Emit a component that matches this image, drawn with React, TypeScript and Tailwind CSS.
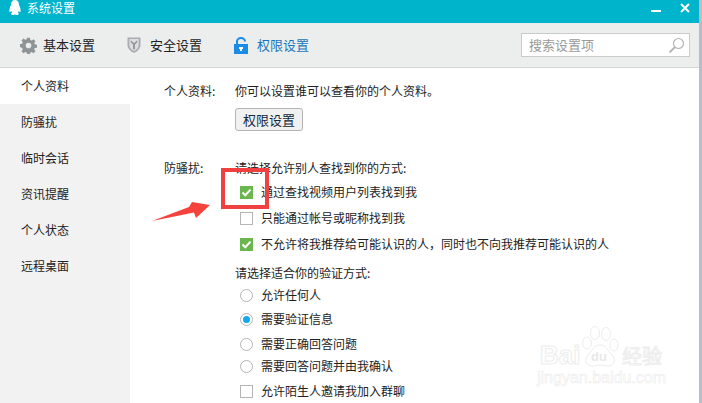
import React from "react";

const sideItems = ["个人资料", "防骚扰", "临时会话", "资讯提醒", "个人状态", "远程桌面"];

const Check = ({ checked, className }: { checked?: boolean; className?: string }) =>
  checked ? (
    <span className={"flex h-[13px] w-[13px] items-center justify-center bg-[#6cb650] " + (className || "")}>
      <svg width="11" height="11" viewBox="0 0 11 11">
        <path d="M1.5 5.5 L4.3 8.2 L9.5 2.6" fill="none" stroke="#fff" strokeWidth="2" />
      </svg>
    </span>
  ) : (
    <span className={"block h-[13px] w-[13px] border border-[#b5b5b5] bg-white " + (className || "")}></span>
  );

const Radio = ({ checked }: { checked?: boolean }) => (
  <span className="flex h-[13px] w-[13px] items-center justify-center rounded-full border border-[#b5b5b5] bg-white">
    {checked && <span className="block h-[7px] w-[7px] rounded-full bg-[#12a8ee]"></span>}
  </span>
);

const CheckRow = ({ text, checked, className }: { text: string; checked?: boolean; className?: string }) => (
  <div className={"flex items-center gap-[8px] pl-[5px] " + (className || "")}>
    <Check checked={checked} />
    <span>{text}</span>
  </div>
);

const RadioRow = ({ text, checked, className }: { text: string; checked?: boolean; className?: string }) => (
  <div className={"flex items-center gap-[8px] pl-[5px] " + (className || "")}>
    <Radio checked={checked} />
    <span>{text}</span>
  </div>
);

export default function App() {
  return (
    <div
      className="relative h-[403px] w-[702px] overflow-hidden bg-white text-[12px] text-[#222]"
      style={{ fontFamily: '"Noto Sans CJK SC", "Liberation Sans", sans-serif' }}
    >
      <div className="flex h-[23px] items-start justify-between bg-[#00b4cc] pl-[9px] pr-[12px] text-white">
        <div className="flex items-start gap-[6px]">
          <svg width="12" height="16" viewBox="0 0 12 16">
            <path d="M6 0 C3 0 2 2.500 2 5 C1 7 0 9.500 .5 12 C1.200 12.500 2 11 2.300 11 L3 12.500 C2 13 1.800 15 4 15 C5 15 5.500 14.500 6 14.500 C6.500 14.500 7 15 8 15 C10.200 15 10 13 9 12.500 L9.700 11 C10 11 10.800 12.500 11.500 12 C12 9.500 11 7 10 5 C10 2.500 9 0 6 0Z" fill="#fff" />
          </svg>
          <span className="leading-[16px]">系统设置</span>
        </div>
        <div className="flex items-start gap-[19px] pt-[3px]">
          <span className="mt-[7px] block h-[2px] w-[10px] bg-white"></span>
          <svg width="10" height="10" viewBox="0 0 10 10">
            <path d="M1 1 L9 9 M9 1 L1 9" stroke="#fff" strokeWidth="2" />
          </svg>
        </div>
      </div>

      <div className="flex h-[45px] items-center border-b border-[#d5d7d7] bg-[#eceeee] pl-[20px] pr-[12px] text-[13px]">
        <div className="flex items-center gap-[6px]">
          <svg width="17" height="17" viewBox="0 0 24 24">
            <path
              fillRule="evenodd"
              fill="#8f9496"
              d="M10 1h4l.6 3.100 1.900.8 2.600-1.800 2.800 2.800-1.800 2.600.8 1.900 3.100.6v4l-3.100.6-.8 1.900 1.800 2.600-2.800 2.800-2.600-1.800-1.900.8-.6 3.100h-4l-.6-3.100-1.900-.8-2.600 1.800-2.800-2.800 1.800-2.600-.8-1.900L0 14v-4l3.100-.6.8-1.900L2.100 4.900l2.800-2.800 2.600 1.800 1.900-.8zM12 8a4 4 0 1 0 0 8 4 4 0 0 0 0-8z"
            />
          </svg>
          <span>基本设置</span>
        </div>
        <div className="ml-[32px] flex items-center gap-[9px]">
          <svg width="14" height="18" viewBox="0 0 15 18">
            <path d="M0.500 1 H14.500 V9 C14.500 13 11 16 7.500 17.500 C4 16 0.500 13 0.500 9Z" fill="#a9adaf" />
            <path d="M2.500 2.500 H12.500 V9 C12.500 12 10 14.500 7.500 15.500 C5 14.500 2.500 12 2.500 9Z" fill="#dcdedf" />
            <path d="M4 4 L7.500 7 L11 4 V6 L8.500 8.500 V13.500 H6.500 V8.500 L4 6Z" fill="#8f9496" />
          </svg>
          <span>安全设置</span>
        </div>
        <div className="ml-[32px] flex items-center gap-[9px] text-[#1a76b8]">
          <svg width="14" height="17" viewBox="0 0 14 17">
            <path d="M3 7 V4.500 C3 2.500 4.800 1 7 1 C9.200 1 11 2.500 11 4.500" fill="none" stroke="#1a8be6" strokeWidth="2" />
            <rect x="0" y="7" width="14" height="10" fill="#1a8be6" />
            <rect x="6" y="10" width="2" height="4" fill="#fff" />
            <rect x="5" y="10" width="4" height="2" fill="#fff" />
          </svg>
          <span>权限设置</span>
        </div>
        <div className="ml-auto flex h-[24px] w-[169px] items-center justify-between border border-[#c9cbcb] bg-white pl-[7px] pr-[4px] text-[#9a9a9a]">
          <span>搜索设置项</span>
          <svg width="17" height="17" viewBox="0 0 17 17">
            <circle cx="10.500" cy="6.500" r="5" fill="none" stroke="#b5b5b5" strokeWidth="1.200" />
            <path d="M7 10 L1.500 15.500" stroke="#b5b5b5" strokeWidth="1.800" />
          </svg>
        </div>
      </div>

      <div className="flex h-[335px]">
        <div className="w-[130px] bg-[#f2f2f2]">
          {sideItems.map((item, i) => (
            <div key={item} className={"flex h-[36px] items-center pl-[21px] " + (i === 0 ? "bg-white" : "")}>
              {item}
            </div>
          ))}
        </div>

        <div className="flex-1 pl-[34px] pt-[14px] leading-[18px]">
          <div className="flex">
            <span className="w-[71px]">个人资料:</span>
            <div>
              <div>你可以设置谁可以查看你的个人资料。</div>
              <button className="mt-[8px] h-[23px] w-[68px] rounded-[3px] border border-[#b4b4b4] bg-[#f1f1f1] text-[13px] text-[#12283c]">
                权限设置
              </button>
            </div>
          </div>

          <div className="mt-[28px] flex">
            <span className="w-[71px]">防骚扰:</span>
            <div>
              <div>请选择允许别人查找到你的方式:</div>
              <CheckRow className="mt-[6px]" text="通过查找视频用户列表找到我" checked />
              <CheckRow className="mt-[8px]" text="只能通过帐号或昵称找到我" />
              <CheckRow className="mt-[8px]" text="不允许将我推荐给可能认识的人，同时也不向我推荐可能认识的人" checked />
              <div className="mt-[11px]">请选择适合你的验证方式:</div>
              <RadioRow className="mt-[4px]" text="允许任何人" />
              <RadioRow className="mt-[6px]" text="需要验证信息" checked />
              <RadioRow className="mt-[7px]" text="需要正确回答问题" />
              <RadioRow className="mt-[4px]" text="需要回答问题并由我确认" />
              <CheckRow className="mt-[7px]" text="允许陌生人邀请我加入群聊" />
            </div>
          </div>
        </div>
      </div>

      <div className="absolute right-0 top-0 h-[403px] w-[3px] bg-[#b9bdc8]"></div>

      {/* 红框和箭头 */}
      <div className="absolute left-[221px] top-[168px] h-[41px] w-[48px] border-[4px] border-[#f04040]"></div>
      <svg className="absolute left-[150px] top-[200px]" width="62" height="24" viewBox="0 0 62 24">
        <path d="M2 21 L39 7 L42 2 L60 5 L46 18 L44 12.500Z" fill="#f5423c" />
      </svg>

      {/* 水印 */}
      <div
        className="absolute left-[540px] top-[344px] text-[26px] font-bold leading-[22px] text-transparent [-webkit-text-stroke:1px_#ededed]"
        style={{ fontFamily: '"Liberation Sans", sans-serif' }}
      >
        Bai
      </div>
      <div className="absolute left-[622px] top-[345px] text-[20px] leading-[22px] text-transparent [-webkit-text-stroke:1px_#ededed]">
        经验
      </div>
      <svg className="absolute left-[580px] top-[326px]" width="40" height="42" viewBox="0 0 40 42">
        <g fill="none" stroke="#ededed">
          <ellipse cx="7" cy="17" rx="4.500" ry="6" />
          <ellipse cx="15" cy="7" rx="4.500" ry="6.500" />
          <ellipse cx="26" cy="8" rx="4.500" ry="6.500" />
          <ellipse cx="34" cy="19" rx="4" ry="6" />
          <path d="M20 19 C14 19 12 25 8 29 C3 34 7 41 14 40 C18 39 23 39 27 40 C33 41 37 34 32 29 C28 25 26 19 20 19Z" />
        </g>
      </svg>
      <div
        className="absolute left-[591px] top-[349px] text-[13px] font-bold leading-[16px] text-[#e9e9e9]"
        style={{ fontFamily: '"Liberation Sans", sans-serif' }}
      >
        du
      </div>
      <div
        className="absolute left-[537px] top-[369px] text-[16px] leading-[18px] text-transparent [-webkit-text-stroke:.6px_#ededed]"
        style={{ fontFamily: '"Liberation Sans", sans-serif' }}
      >
        jingyan.baidu.com
      </div>
    </div>
  );
}
